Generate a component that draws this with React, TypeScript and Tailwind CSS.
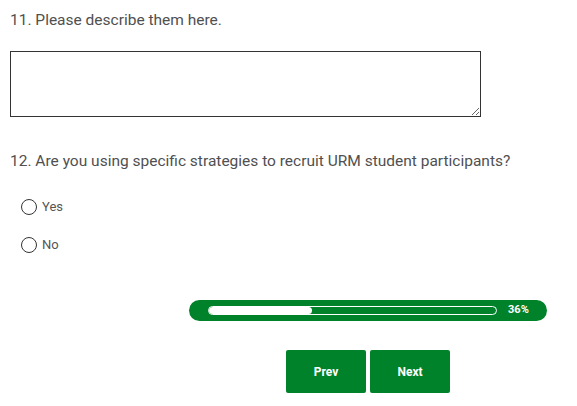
import { useState } from "react";

const GREEN = "bg-[#00822a]";

function Radio({ label, checked, onClick }: { label: string; checked: boolean; onClick: () => void }) {
  return (
    <label className="flex items-center h-4 gap-[5px] cursor-pointer" onClick={onClick}>
      <span className="w-4 h-4 rounded-full border border-[#333] flex items-center justify-center">
        {checked && <span className="w-2 h-2 rounded-full bg-[#333]" />}
      </span>
      <span className="text-[13px] leading-4 text-[#555]">{label}</span>
    </label>
  );
}

export default function App() {
  const [answer, setAnswer] = useState<string | null>(null);
  const pct = 36;

  return (
    <div className="w-[577px] h-[406px] bg-white font-['Roboto',sans-serif] text-[#333e48]">
      <div className="pl-[10px] pt-[11px]">
        <h2 className="text-[15.5px] leading-[18px] text-[#505050]">11. Please describe them here.</h2>
        <textarea className="mt-[22px] block w-[471px] h-[66px] border border-[#333] outline-none resize-y" />

        <h2 className="mt-[35px] text-[15.5px] leading-[18px] text-[#505050]">
          12. Are you using specific strategies to recruit URM student participants?
        </h2>
        <div className="mt-[29px] pl-[11px] flex flex-col gap-[22px]">
          <Radio label="Yes" checked={answer === "yes"} onClick={() => setAnswer("yes")} />
          <Radio label="No" checked={answer === "no"} onClick={() => setAnswer("no")} />
        </div>
      </div>

      <div className="mt-[47px] ml-[189px] w-[358px] h-[21px] rounded-full bg-[#00822a] flex items-center pl-[19px]">
        <div className="w-[289px] shrink-0 h-[9px] rounded-full border border-white overflow-hidden">
          <div className="h-full bg-white rounded-full" style={{ width: `${pct}%` }} />
        </div>
        <span className="ml-[11px] text-[11px] font-bold text-white">{pct}%</span>
      </div>

      <div className="mt-[29px] ml-[286px] flex gap-1">
        <button className={`${GREEN} w-20 h-[43px] rounded-[2px] text-white text-[12px] font-bold`}>Prev</button>
        <button className={`${GREEN} w-20 h-[43px] rounded-[2px] text-white text-[12px] font-bold`}>Next</button>
      </div>
    </div>
  );
}
